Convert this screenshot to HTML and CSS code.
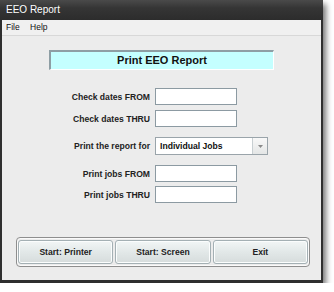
FILE: index.html
```html
<!DOCTYPE html>
<html lang="en">
<head>
    <meta charset="UTF-8">
    <title>EEO Report</title>
    <link rel="stylesheet" href="styles.css">
</head>
<body>

<div class="window">
    <div class="title-bar">EEO Report</div>
    <div class="client">
        <div class="menu-bar">
            <span class="menu-item">File</span>
            <span class="menu-item">Help</span>
        </div>

        <div class="heading">Print EEO Report</div>

        <div class="form">
            <div class="row">
                <label class="label">Check dates FROM</label>
                <input class="field" type="text">
            </div>
            <div class="row">
                <label class="label">Check dates THRU</label>
                <input class="field" type="text">
            </div>
            <div class="row row-select">
                <label class="label">Print the report for</label>
                <div class="select">
                    <span class="select-text">Individual Jobs</span>
                    <span class="select-arrow">
                        <svg width="5" height="3" viewBox="0 0 5 3"><path d="M0 0 H5 L2.5 3 Z" fill="#8a8a8a"/></svg>
                    </span>
                </div>
            </div>
            <div class="row row-gap">
                <label class="label">Print jobs FROM</label>
                <input class="field" type="text">
            </div>
            <div class="row row-tight">
                <label class="label">Print jobs THRU</label>
                <input class="field" type="text">
            </div>
        </div>

        <div class="button-panel">
            <button class="button">Start: Printer</button>
            <button class="button">Start: Screen</button>
            <button class="button">Exit</button>
        </div>
    </div>
</div>

</body>
</html>
```

FILE: styles.css
```css
body {
    margin: 0;
    background: #fff;
    font-family: 'Liberation Sans', Arial, sans-serif;
}

.window {
    width: 323px;
    height: 283px;
    box-sizing: border-box;
    padding: 0 2px 3px 2px;
    background: #2f2f2f;
    display: flex;
    flex-direction: column;
    box-shadow: 3px 4px 6px rgba(0, 0, 0, 0.55);
}

.title-bar {
    height: 20px;
    line-height: 20px;
    padding-left: 4px;
    color: #fff;
    font-size: 10px;
    background: linear-gradient(#4a4a4a, #353535 40%, #2c2c2c);
    margin: 0 -2px;
    padding-left: 6px;
}

.client {
    flex: 1;
    background: #ececec;
    display: flex;
    flex-direction: column;
}

.menu-bar {
    height: 15px;
    line-height: 15px;
    background: #f0f0f0;
    border-bottom: 1px solid #d8d8d8;
    font-size: 8.5px;
    color: #111;
    padding-left: 4px;
}

.menu-item {
    margin-right: 8px;
}

.heading {
    margin: 14px 0 0 47px;
    width: 225px;
    height: 20px;
    box-sizing: border-box;
    background: #c4ffff;
    border-top: 2px solid #8e9ea4;
    border-left: 2px solid #8e9ea4;
    border-bottom: 1px solid #fff;
    border-right: 1px solid #fff;
    font-weight: bold;
    font-size: 11px;
    line-height: 17px;
    text-align: center;
    color: #111;
}

.form {
    margin-top: 18px;
}

.row {
    display: flex;
    align-items: center;
    height: 17px;
    margin-top: 5px;
}

.row:first-child {
    margin-top: 0;
}

.row-select {
    height: 18px;
    margin-top: 10px;
}

.row-gap {
    margin-top: 10px;
}

.row-tight {
    margin-top: 4px;
}

.label {
    width: 148px;
    margin-right: 5px;
    text-align: right;
    font-weight: bold;
    font-size: 8.6px;
    color: #222;
}

.field {
    width: 82px;
    height: 17px;
    box-sizing: border-box;
    margin: 0;
    padding: 0;
    border: 1px solid #8c9aa2;
    background: #fff;
}

.select {
    width: 113px;
    height: 18px;
    box-sizing: border-box;
    border: 1px solid #9aa4aa;
    background: #fff;
    display: flex;
    align-items: center;
}

.select-text {
    flex: 1;
    padding-left: 4px;
    font-weight: bold;
    font-size: 8.6px;
    color: #111;
}

.select-arrow {
    width: 15px;
    height: 100%;
    box-sizing: border-box;
    border-left: 1px solid #c8cfd2;
    background: linear-gradient(#f8f8f8, #e4e6e6);
    display: flex;
    align-items: center;
    justify-content: center;
}

.button-panel {
    margin: 34px 0 0 14px;
    width: 294px;
    height: 30px;
    box-sizing: border-box;
    padding: 2px 1px;
    border: 1px solid #8e8e8e;
    border-radius: 4px;
    box-shadow: inset 0 0 0 1px #fafafa;
    display: flex;
    gap: 2px;
}

.button {
    flex: 1;
    height: 24px;
    margin: 0;
    padding: 0;
    border: 1px solid #a4b0b4;
    border-radius: 3px;
    background: linear-gradient(#f2f6f6, #e2e8e8 50%, #d6dcdc);
    box-shadow: inset 0 0 0 1px #fbfdfd;
    font-family: 'Liberation Sans', Arial, sans-serif;
    font-weight: bold;
    font-size: 8.6px;
    color: #222;
}
```
